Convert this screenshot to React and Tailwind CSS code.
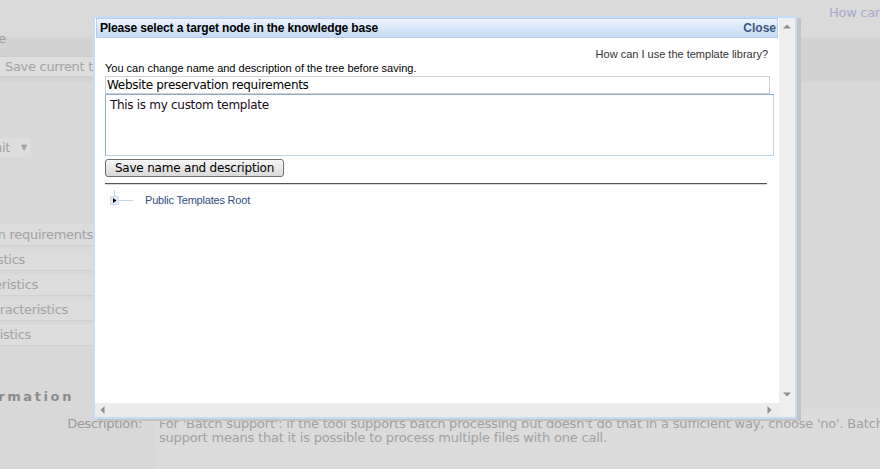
import React from "react";

function Clip({ w, children, className = "" }) {
  return (
    <div className={"flex justify-end overflow-hidden whitespace-nowrap " + className} style={{ width: w }}>
      <span className="shrink-0">{children}</span>
    </div>
  );
}

export default function App() {
  return (
    <div className="relative w-[880px] h-[469px] overflow-hidden bg-[#d8d8d8] font-['DejaVu_Sans',sans-serif] text-[12px] tracking-[-0.3px] text-[#a3a3a3]">
      {/* background page (under overlay) */}
      <div className="flex flex-col">
        <div className="h-[37px] bg-[#dadada] flex flex-col justify-between">
          <div className="pl-[829px] pt-[3px] whitespace-nowrap text-[13px] text-[#a9a9cc]">How can I use the template library?</div>
          <Clip w={6} className="leading-[14px] text-[13px] text-[#9d9d9d] mb-[-9px] relative">Template name</Clip>
        </div>
        <div className="h-[45px] bg-[#d3d3d3] flex flex-col pt-[19px]">
          <div className="h-[21px] w-[100px] bg-[#dedede] border-t border-b border-[#cdcdcd] flex items-center pl-[5px] whitespace-nowrap text-[13px]">Save current template</div>
        </div>
        <div className="h-[56px]" />
        <div className="h-[19px] w-[31px] bg-[#dddddd] flex items-center">
          <Clip w={10} className="text-[13px]">Submit</Clip>
          <span className="ml-[11px] text-[8px] text-[#a0a0a0]">▼</span>
        </div>
        <div className="h-[67px]" />
        {[
          ["Website preservation requirements", 93],
          ["Object characteristics", 25],
          ["Process characteristics", 38],
          ["Technical characteristics", 68],
          ["Tool characteristics", 31],
        ].map(([t, w]) => (
          <div key={t} className="h-[22px] mb-[3px] w-[100px] bg-[#dcdcdc] border-b border-[#d0d0d0] flex items-center text-[13px]">
            <Clip w={w}>{t}</Clip>
          </div>
        ))}
        <div className="h-[41px]" />
        <div className="h-[14px] flex items-center font-bold text-[13px] tracking-[2.6px] text-[#8c8c8c]">
          <Clip w={74}>Tool information</Clip>
        </div>
        <div className="h-[4px]" />
        <div className="flex">
          <div className="w-[155px] shrink-0 pr-[13px] pt-[6px] text-right text-[13px] text-[#9b9b9b]">Description:</div>
          <div className="w-[740px] shrink-0 h-[70px] bg-[#dbdbdb] pl-[4px] pt-[9px] leading-[14px] text-[13px] tracking-[-0.2px] text-[#a1a1a1]">
            For 'Batch support': if the tool supports batch processing but doesn't do that in a sufficient way, choose 'no'. Batch support means that it is possible to process multiple files with one call.
          </div>
        </div>
      </div>

      {/* modal dialog overlay */}
      <div className="absolute left-[93px] top-[16px] w-[704px] h-[403px] border-2 border-[#c6dbf5] bg-white shadow-[4px_2px_0_0_#c3c3c3] flex flex-col tracking-normal">
        <div className="flex flex-1 min-h-0">
          <div className="flex-1 min-w-0 flex flex-col font-['Liberation_Sans',Arial,sans-serif] text-black">
            <div className="mx-[1px] h-[20px] border border-[#b7cdea] bg-gradient-to-b from-[#edf4fd] to-[#c6dbf6] flex items-center justify-between pl-[3px] pr-[1px]">
              <span className="font-bold text-[12px] tracking-[-0.15px]">Please select a target node in the knowledge base</span>
              <span className="font-bold text-[12px] text-[#3b5a80]">Close</span>
            </div>
            <div className="pl-[10px] pr-[11px] flex flex-col">
              <div className="mt-[10px] leading-[13px] text-[11px] text-right text-[#333]">How can I use the template library?</div>
              <div className="mt-[1px] leading-[13px] text-[11px]">You can change name and description of the tree before saving.</div>
              <input
                readOnly
                defaultValue="Website preservation requirements"
                className="mt-[1px] w-[665px] h-[18px] border border-[#d0d0d0] px-[1px] outline-none font-['DejaVu_Sans',sans-serif] text-[12px] tracking-[-0.3px] text-black"
              />
              <textarea
                readOnly
                defaultValue="This is my custom template"
                className="w-[669px] h-[62px] resize-none border border-[#8eabc8] border-b-[#bcd2e6] border-r-[#bcd2e6] px-[4px] pt-[3px] pb-[2px] leading-[15px] outline-none font-['DejaVu_Sans',sans-serif] text-[12px] tracking-[-0.3px] text-[#1a0a20]"
              />
              <div className="mt-[3px] w-[179px] h-[18px] rounded-[3px] border border-[#717171] bg-gradient-to-b from-[#f6f6f6] to-[#d9d9d9] flex items-center justify-center font-['DejaVu_Sans',sans-serif] text-[12px] tracking-[-0.2px] text-black">
                Save name and description
              </div>
              <div className="mt-[6px] w-[662px] h-[2px] border-t border-[#555555] border-b border-b-[#d8d8d8]" />
              <div className="mt-[5px] flex items-start">
                <svg width="24" height="16" viewBox="0 0 24 16" className="ml-[5px] shrink-0">
                  <line x1="4.5" y1="0" x2="4.5" y2="6" stroke="#c3d6ef" />
                  <line x1="8" y1="10.5" x2="23" y2="10.5" stroke="#c3d6ef" />
                  <rect x="0.5" y="6.5" width="8" height="8" fill="#e4edf9" stroke="#cbdaf0" />
                  <polygon points="3,8 6.5,10.5 3,13" fill="#000" />
                </svg>
                <span className="ml-[11px] mt-[4px] leading-[13px] text-[11px] tracking-[-0.2px] text-[#2f4f82]">Public Templates Root</span>
              </div>
            </div>
          </div>
          <div className="w-[16px] bg-[#eeeeee] flex flex-col items-center justify-between py-[6px]">
            <svg width="8" height="5" viewBox="0 0 8 5"><polygon points="0,4.5 4,0.5 8,4.5" fill="#8e8e8e" /></svg>
            <svg width="8" height="5" viewBox="0 0 8 5"><polygon points="0,0.5 4,4.5 8,0.5" fill="#8e8e8e" /></svg>
          </div>
        </div>
        <div className="h-[14px] flex">
          <div className="flex-1 bg-[#ebebeb] flex items-center justify-between pl-[5px] pr-[7px]">
            <svg width="5" height="8" viewBox="0 0 5 8"><polygon points="4.5,0 0.5,4 4.5,8" fill="#8e8e8e" /></svg>
            <svg width="5" height="8" viewBox="0 0 5 8"><polygon points="0.5,0 4.5,4 0.5,8" fill="#8e8e8e" /></svg>
          </div>
          <div className="w-[16px] bg-[#eeeeee]" />
        </div>
      </div>
    </div>
  );
}
